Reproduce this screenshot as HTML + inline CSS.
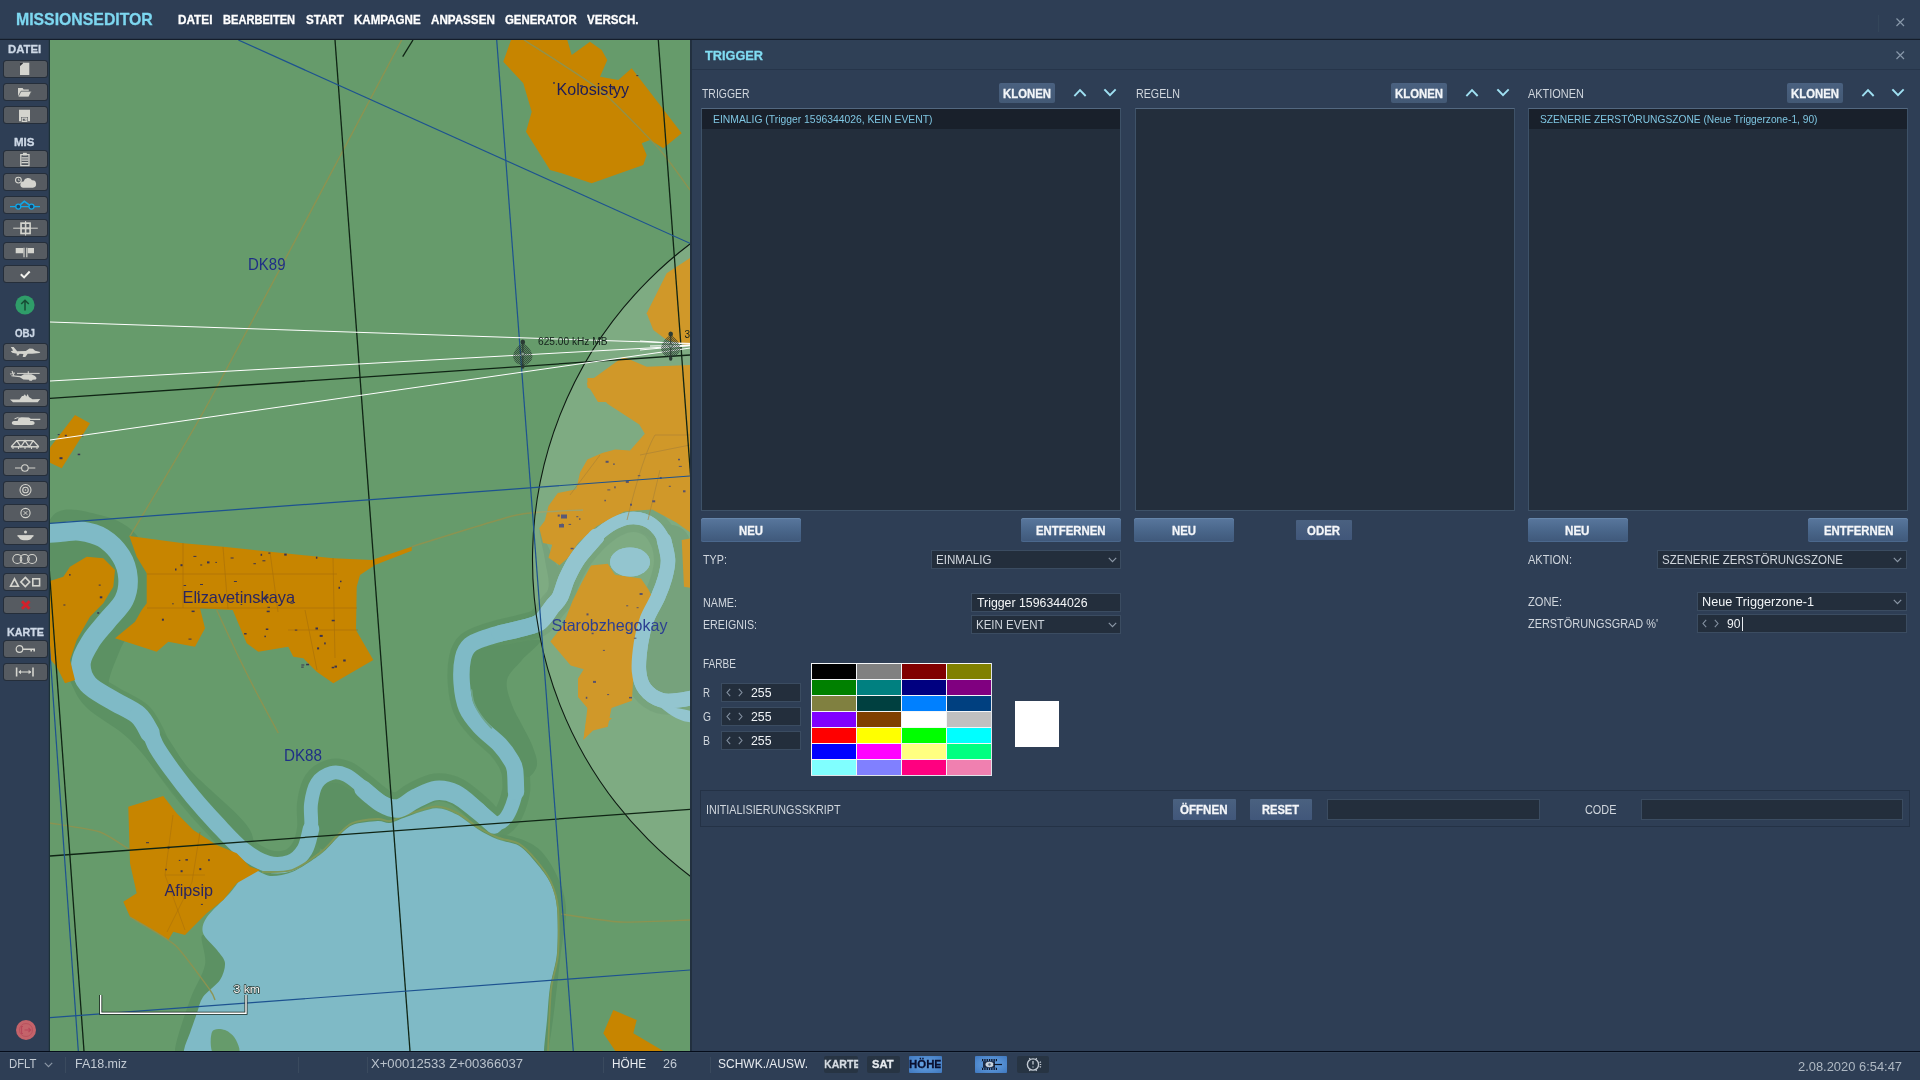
<!DOCTYPE html>
<html><head><meta charset="utf-8"><title>Missionseditor</title>
<style>
*{margin:0;padding:0;box-sizing:border-box}
html,body{width:1920px;height:1080px;overflow:hidden;background:#2e3e55;font-family:"Liberation Sans",sans-serif}
body{position:relative}
.a{position:absolute}
.t{position:absolute;transform-origin:0 0;white-space:pre;line-height:1;font-family:"Liberation Sans",sans-serif}
#top{left:0;top:0;width:1920px;height:38px;background:#2e3e55}
#topline{left:0;top:38px;width:1920px;height:2px;background:linear-gradient(#29384b 50%,#141d2b 50%)}
#side{left:0;top:40px;width:50px;height:1012px;background:#2e3e55}
#sideedge{left:48px;top:40px;width:2px;height:1011px;background:linear-gradient(90deg,#2a3b4d 50%,#1c3138 50%)}
#panel{left:690px;top:40px;width:1230px;height:1012px;background:#2e3e55}
#paneledge{left:690px;top:40px;width:2px;height:1011px;background:#22303f}
#ptitle{left:692px;top:40px;width:1228px;height:29px;background:#2f4056}
#psep{left:692px;top:69px;width:1228px;height:1px;background:#26354a}
#status{left:0;top:1053px;width:1920px;height:27px;background:#2e3e55}
#statline{left:0;top:1051px;width:1920px;height:2px;background:linear-gradient(#050c1a 50%,#33445a 50%)}
.list{background:#232e3c;border:1px solid #3e5268;border-top-color:#536880}
.sel{background:#19202b}
.inp{background:#232e3c;border:1px solid #3b4c61}
.kl{background:linear-gradient(#4a6180,#435975);border-radius:2px}
.btn{border-radius:2.5px;background:linear-gradient(#59779d,#4a678b 50%,#3f587a);box-shadow:inset 0 1px 0 #6685aa,inset 0 -1px 0 #4b688d}
.fbtn{background:linear-gradient(#4a6180,#41577a);border-radius:1px}
.sb{left:4px;width:43px;height:16px;background:#565b61;border-radius:2.5px;box-shadow:0 0 0 1px #252e3a}
.sep{width:1px;height:16px;top:1057px;background:#3a4a5e}
.dk{background:#273443;border-radius:2px}
.act{background:radial-gradient(ellipse at center,#6aa6e6,#3f78bf);border-radius:1px}
.pal{border-top:1px solid #f4f6f8;border-left:1px solid #f4f6f8}
svg{position:absolute;overflow:visible}
#txt{position:absolute;left:0;top:0;width:1920px;height:1080px;will-change:transform;pointer-events:none}

</style></head>
<body>
<svg class="a" style="left:50px;top:40px;overflow:hidden;will-change:transform" width="640" height="1011" viewBox="50 40 640 1011"><rect x="50" y="40" width="640" height="1011" fill="#669b6b"/>
<path d="M40.0 534.0C43.7 533.7 55.3 532.5 62.0 532.0C68.7 531.5 73.2 530.0 80.0 531.0C86.8 532.0 96.2 533.8 103.0 538.0C109.8 542.2 116.8 549.3 121.0 556.0C125.2 562.7 127.5 570.7 128.0 578.0C128.5 585.3 127.5 592.8 124.0 600.0C120.5 607.2 112.5 614.2 107.0 621.0C101.5 627.8 95.3 634.0 91.0 641.0C86.7 648.0 81.5 655.8 81.0 663.0C80.5 670.2 82.8 677.8 88.0 684.0C93.2 690.2 103.7 694.8 112.0 700.0C120.3 705.2 131.7 709.5 138.0 715.0C144.3 720.5 146.8 727.5 150.0 733.0C153.2 738.5 153.3 741.8 157.0 748.0C160.7 754.2 166.0 761.8 172.0 770.0C178.0 778.2 185.5 788.0 193.0 797.0C200.5 806.0 208.7 815.2 217.0 824.0C225.3 832.8 234.5 843.3 243.0 850.0C251.5 856.7 260.2 861.8 268.0 864.0C275.8 866.2 283.9 865.3 290.0 863.0C296.1 860.7 301.1 855.7 304.6 850.0C308.1 844.3 309.9 836.7 311.0 829.0C312.1 821.3 310.0 811.7 311.0 804.0C312.0 796.3 313.6 788.2 317.0 783.0C320.4 777.8 326.9 774.3 331.7 773.0C336.5 771.7 340.8 772.6 346.0 775.0C351.2 777.4 357.1 783.0 363.0 787.5C368.9 792.0 375.9 798.9 381.7 802.0C387.5 805.1 392.4 807.0 398.0 806.0C403.6 805.0 408.7 798.9 415.0 795.8C421.3 792.7 428.9 788.2 435.8 787.5C442.8 786.8 449.8 788.3 456.7 791.7C463.6 795.1 471.3 802.8 477.5 808.0C483.7 813.2 489.1 821.5 494.0 823.0C498.9 824.5 503.0 821.9 506.7 816.7C510.4 811.5 514.6 800.0 516.0 791.7C517.4 783.4 515.2 770.3 515.0 766.7C514.8 763.1 515.7 771.1 515.0 770.0C514.3 768.9 513.5 764.2 511.0 760.0C508.5 755.8 505.2 750.5 500.0 745.0C494.8 739.5 485.6 732.9 480.0 726.7C474.4 720.5 469.8 715.3 466.7 708.0C463.6 700.7 462.3 691.3 461.7 683.0C461.1 674.7 461.6 664.3 463.0 658.0C464.4 651.7 466.3 648.3 470.0 645.0C473.7 641.7 480.0 639.9 485.0 638.0C490.0 636.1 493.7 635.2 500.0 633.5C506.3 631.8 516.3 629.9 523.0 628.0C529.7 626.1 535.2 625.5 540.0 622.0C544.8 618.5 548.7 611.2 552.0 607.0C555.3 602.8 557.5 601.8 560.0 597.0C562.5 592.2 564.0 584.5 567.0 578.0C570.0 571.5 573.2 564.8 578.0 558.0C582.8 551.2 589.8 542.8 596.0 537.0C602.2 531.2 608.7 526.2 615.0 523.0C621.3 519.8 627.8 517.8 634.0 518.0C640.2 518.2 647.0 520.3 652.0 524.0C657.0 527.7 661.3 534.0 664.0 540.0C666.7 546.0 667.8 553.7 668.0 560.0C668.2 566.3 666.7 571.8 665.0 578.0C663.3 584.2 661.0 590.2 658.0 597.0C655.0 603.8 649.8 611.3 647.0 619.0C644.2 626.7 642.3 634.3 641.0 643.0C639.7 651.7 638.3 663.3 639.0 671.0C639.7 678.7 641.3 684.2 645.0 689.0C648.7 693.8 655.2 698.2 661.0 700.0C666.8 701.8 673.5 700.7 680.0 700.0C686.5 699.3 696.7 696.7 700.0 696.0" fill="none" stroke="#5c9163" stroke-width="28" stroke-linecap="round" stroke-linejoin="round" opacity=".8"/>
<path d="M50.0 520.0C58.3 502.5 85.0 511.7 100.0 515.0C115.0 518.3 131.7 525.8 140.0 540.0C148.3 554.2 153.3 581.7 150.0 600.0C146.7 618.3 126.7 633.3 120.0 650.0C113.3 666.7 103.3 686.7 110.0 700.0C116.7 713.3 146.7 718.3 160.0 730.0C173.3 741.7 175.0 753.3 190.0 770.0C205.0 786.7 241.7 815.0 250.0 830.0C258.3 845.0 251.7 865.0 240.0 860.0C228.3 855.0 198.3 820.0 180.0 800.0C161.7 780.0 146.7 756.7 130.0 740.0C113.3 723.3 91.7 716.7 80.0 700.0C68.3 683.3 65.0 653.3 60.0 640.0C55.0 626.7 51.7 640.0 50.0 620.0C48.3 600.0 41.7 537.5 50.0 520.0Z" fill="#5c9163"/>
<path d="M478.0 648.0C483.8 645.5 494.7 646.3 505.0 645.0C515.3 643.7 537.2 637.5 540.0 640.0C542.8 642.5 527.5 653.3 522.0 660.0C516.5 666.7 508.7 672.5 507.0 680.0C505.3 687.5 509.5 697.5 512.0 705.0C514.5 712.5 518.7 718.3 522.0 725.0C525.3 731.7 529.5 738.3 532.0 745.0C534.5 751.7 537.8 759.7 537.0 765.0C536.2 770.3 530.7 777.8 527.0 777.0C523.3 776.2 519.5 766.2 515.0 760.0C510.5 753.8 505.0 746.3 500.0 740.0C495.0 733.7 489.7 727.8 485.0 722.0C480.3 716.2 474.8 712.0 472.0 705.0C469.2 698.0 468.3 687.5 468.0 680.0C467.7 672.5 468.3 665.3 470.0 660.0C471.7 654.7 472.2 650.5 478.0 648.0Z" fill="#5c9163"/>
<path d="M318.0 790.0C321.2 783.8 329.7 783.0 335.0 783.0C340.3 783.0 345.0 787.2 350.0 790.0C355.0 792.8 360.0 796.3 365.0 800.0C370.0 803.7 375.0 809.0 380.0 812.0C385.0 815.0 394.2 815.8 395.0 818.0C395.8 820.2 390.8 824.0 385.0 825.0C379.2 826.0 366.7 822.3 360.0 824.0C353.3 825.7 350.0 830.7 345.0 835.0C340.0 839.3 334.5 848.3 330.0 850.0C325.5 851.7 320.3 850.0 318.0 845.0C315.7 840.0 316.0 829.2 316.0 820.0C316.0 810.8 314.8 796.2 318.0 790.0Z" fill="#5c9163"/>
<path d="M203.0 935.0C208.0 934.2 230.8 951.7 235.0 960.0C239.2 968.3 233.0 978.3 228.0 985.0C223.0 991.7 211.3 989.0 205.0 1000.0C198.7 1011.0 195.0 1042.5 190.0 1051.0C185.0 1059.5 175.0 1059.5 175.0 1051.0C175.0 1042.5 185.0 1014.3 190.0 1000.0C195.0 985.7 202.8 975.8 205.0 965.0C207.2 954.2 198.0 935.8 203.0 935.0Z" fill="#5c9163"/>
<path d="M500.0 835.0C502.5 833.3 529.2 839.2 540.0 850.0C550.8 860.8 561.7 881.7 565.0 900.0C568.3 918.3 562.8 934.8 560.0 960.0C557.2 985.2 551.7 1035.8 548.0 1051.0C544.3 1066.2 538.0 1066.2 538.0 1051.0C538.0 1035.8 546.3 985.2 548.0 960.0C549.7 934.8 551.8 916.7 548.0 900.0C544.2 883.3 533.0 870.8 525.0 860.0C517.0 849.2 497.5 836.7 500.0 835.0Z" fill="#5c9163"/>
<path d="M540.0 530.0C542.5 531.7 554.2 562.5 560.0 570.0C565.8 577.5 573.3 570.0 575.0 575.0C576.7 580.0 574.2 591.7 570.0 600.0C565.8 608.3 558.3 618.3 550.0 625.0C541.7 631.7 528.3 639.2 520.0 640.0C511.7 640.8 498.3 634.2 500.0 630.0C501.7 625.8 522.0 621.7 530.0 615.0C538.0 608.3 545.5 599.2 548.0 590.0C550.5 580.8 546.3 570.0 545.0 560.0C543.7 550.0 537.5 528.3 540.0 530.0Z" fill="#5c9163"/>
<path d="M640.0 530.0C645.0 529.2 681.7 513.3 690.0 540.0C698.3 566.7 696.7 665.0 690.0 690.0C683.3 715.0 657.0 696.7 650.0 690.0C643.0 683.3 647.2 663.3 648.0 650.0C648.8 636.7 651.7 623.3 655.0 610.0C658.3 596.7 667.2 580.8 668.0 570.0C668.8 559.2 664.7 551.7 660.0 545.0C655.3 538.3 635.0 530.8 640.0 530.0Z" fill="#5c9163"/>
<path d="M250.0 870.0C256.0 867.5 263.7 875.7 270.0 876.0C276.3 876.3 284.4 875.3 292.0 872.0C299.6 868.7 314.2 859.1 321.0 854.0C327.8 848.9 332.3 842.4 337.0 838.0C341.7 833.6 346.4 827.5 352.5 825.0C358.6 822.5 371.9 821.3 377.5 821.0C383.1 820.7 385.6 823.6 390.0 823.0C394.4 822.4 399.8 818.9 406.7 816.7C413.6 814.5 428.3 808.6 435.8 808.3C443.3 808.0 450.4 811.5 456.7 814.6C463.0 817.7 471.3 825.2 477.5 829.0C483.7 832.8 491.8 837.1 498.0 839.6C504.2 842.1 513.3 842.4 519.0 845.8C524.7 849.2 531.1 856.9 535.8 862.5C540.5 868.1 547.2 876.2 550.4 883.0C553.6 889.8 556.0 897.5 557.0 908.0C558.0 918.5 558.0 941.1 557.0 953.0C556.0 964.9 551.5 977.0 550.0 987.0C548.5 997.0 547.9 1010.5 547.0 1020.0C546.1 1029.5 544.6 1041.8 544.0 1050.0C543.4 1058.2 543.6 1064.5 543.0 1075.0C542.4 1085.5 593.0 1113.2 540.0 1120.0C487.1 1126.8 243.6 1126.8 190.0 1120.0C136.4 1113.2 183.9 1085.5 183.0 1075.0C182.1 1064.5 182.9 1056.3 184.0 1050.0C185.1 1043.7 188.1 1038.5 190.0 1033.0C191.9 1027.5 195.1 1018.4 197.0 1013.0C198.9 1007.6 199.6 1002.0 203.0 997.0C206.4 992.0 216.7 985.1 220.0 980.0C223.3 974.9 225.4 967.5 225.0 963.0C224.6 958.5 220.3 954.5 217.0 950.0C213.7 945.5 204.5 938.0 203.0 933.0C201.5 928.0 202.9 923.0 207.0 917.0C211.1 911.0 223.6 900.0 230.0 893.0C236.4 886.0 244.0 872.5 250.0 870.0Z" fill="#7fbac6"/>
<path d="M212.0 1032.0C213.8 1027.8 221.0 1028.7 225.0 1030.0C229.0 1031.3 233.8 1035.8 236.0 1040.0C238.2 1044.2 241.7 1052.5 238.0 1055.0C234.3 1057.5 218.3 1058.8 214.0 1055.0C209.7 1051.2 210.2 1036.2 212.0 1032.0Z" fill="#669b6b"/>
<path d="M40.0 534.0C43.7 533.7 55.3 532.5 62.0 532.0C68.7 531.5 73.2 530.0 80.0 531.0C86.8 532.0 96.2 533.8 103.0 538.0C109.8 542.2 116.8 549.3 121.0 556.0C125.2 562.7 127.5 570.7 128.0 578.0C128.5 585.3 127.5 592.8 124.0 600.0C120.5 607.2 112.5 614.2 107.0 621.0C101.5 627.8 95.3 634.0 91.0 641.0C86.7 648.0 81.5 655.8 81.0 663.0C80.5 670.2 82.8 677.8 88.0 684.0C93.2 690.2 103.7 694.8 112.0 700.0C120.3 705.2 131.7 709.5 138.0 715.0C144.3 720.5 148.0 730.0 150.0 733.0" fill="none" stroke="#7fbac6" stroke-width="19.5" stroke-linecap="round" stroke-linejoin="round"/>
<path d="M138.0 715.0C140.0 718.0 146.8 727.5 150.0 733.0C153.2 738.5 153.3 741.8 157.0 748.0C160.7 754.2 166.0 761.8 172.0 770.0C178.0 778.2 185.5 788.0 193.0 797.0C200.5 806.0 208.7 815.2 217.0 824.0C225.3 832.8 234.5 843.3 243.0 850.0C251.5 856.7 260.2 861.8 268.0 864.0C275.8 866.2 283.9 865.3 290.0 863.0C296.1 860.7 301.1 855.7 304.6 850.0C308.1 844.3 309.9 832.5 311.0 829.0" fill="none" stroke="#7fbac6" stroke-width="16.5" stroke-linecap="round" stroke-linejoin="round"/>
<path d="M304.6 850.0C305.7 846.5 309.9 836.7 311.0 829.0C312.1 821.3 310.0 811.7 311.0 804.0C312.0 796.3 313.6 788.2 317.0 783.0C320.4 777.8 326.9 774.3 331.7 773.0C336.5 771.7 340.8 772.6 346.0 775.0C351.2 777.4 357.1 783.0 363.0 787.5C368.9 792.0 375.9 798.9 381.7 802.0C387.5 805.1 392.4 807.0 398.0 806.0C403.6 805.0 408.7 798.9 415.0 795.8C421.3 792.7 428.9 788.2 435.8 787.5C442.8 786.8 449.8 788.3 456.7 791.7C463.6 795.1 471.3 802.8 477.5 808.0C483.7 813.2 489.1 821.5 494.0 823.0C498.9 824.5 503.0 821.9 506.7 816.7C510.4 811.5 514.6 800.0 516.0 791.7C517.4 783.4 515.2 770.9 515.0 766.7" fill="none" stroke="#7fbac6" stroke-width="13.8" stroke-linecap="round" stroke-linejoin="round"/>
<path d="M516.0 791.7C515.8 788.1 515.8 775.3 515.0 770.0C514.2 764.7 513.5 764.2 511.0 760.0C508.5 755.8 505.2 750.5 500.0 745.0C494.8 739.5 485.6 732.9 480.0 726.7C474.4 720.5 469.8 715.3 466.7 708.0C463.6 700.7 462.3 691.3 461.7 683.0C461.1 674.7 461.6 664.3 463.0 658.0C464.4 651.7 466.3 648.3 470.0 645.0C473.7 641.7 480.0 639.9 485.0 638.0C490.0 636.1 493.7 635.2 500.0 633.5C506.3 631.8 516.3 629.9 523.0 628.0C529.7 626.1 535.2 625.5 540.0 622.0C544.8 618.5 548.7 611.2 552.0 607.0C555.3 602.8 557.5 601.8 560.0 597.0C562.5 592.2 564.0 584.5 567.0 578.0C570.0 571.5 573.2 564.8 578.0 558.0C582.8 551.2 593.0 540.5 596.0 537.0" fill="none" stroke="#7fbac6" stroke-width="16.5" stroke-linecap="round" stroke-linejoin="round"/>
<path d="M578.0 558.0C581.0 554.5 589.8 542.8 596.0 537.0C602.2 531.2 608.7 526.2 615.0 523.0C621.3 519.8 627.8 517.8 634.0 518.0C640.2 518.2 647.0 520.3 652.0 524.0C657.0 527.7 661.3 534.0 664.0 540.0C666.7 546.0 667.3 556.7 668.0 560.0" fill="none" stroke="#7fbac6" stroke-width="12.5" stroke-linecap="round" stroke-linejoin="round"/>
<path d="M664.0 540.0C664.7 543.3 667.8 553.7 668.0 560.0C668.2 566.3 666.7 571.8 665.0 578.0C663.3 584.2 661.0 590.2 658.0 597.0C655.0 603.8 649.8 611.3 647.0 619.0C644.2 626.7 642.3 634.3 641.0 643.0C639.7 651.7 638.3 663.3 639.0 671.0C639.7 678.7 641.3 684.2 645.0 689.0C648.7 693.8 655.2 698.2 661.0 700.0C666.8 701.8 673.5 700.7 680.0 700.0C686.5 699.3 696.7 696.7 700.0 696.0" fill="none" stroke="#7fbac6" stroke-width="14.5" stroke-linecap="round" stroke-linejoin="round"/>
<path d="M262.0 872.0C266.5 871.7 283.1 873.0 292.0 870.0C300.9 867.0 314.2 857.1 321.0 852.0C327.8 846.9 332.3 840.4 337.0 836.0C341.7 831.6 346.4 825.5 352.5 823.0C358.6 820.5 371.9 819.3 377.5 819.0C383.1 818.7 385.6 821.6 390.0 821.0C394.4 820.4 399.8 816.9 406.7 814.7C413.6 812.5 428.3 806.6 435.8 806.3C443.3 806.0 450.4 809.5 456.7 812.6C463.0 815.7 471.3 823.2 477.5 827.0C483.7 830.8 491.8 835.1 498.0 837.6C504.2 840.1 513.3 840.4 519.0 843.8C524.7 847.2 531.2 854.3 536.0 860.0C540.8 865.7 547.7 874.8 551.0 882.0C554.3 889.2 557.0 897.0 558.0 908.0C559.0 919.0 559.0 942.7 558.0 955.0C557.0 967.3 552.5 975.6 551.0 990.0C549.5 1004.4 548.5 1041.8 548.0 1051.0" fill="none" stroke="#7f9858" stroke-width="1.8"/>
<path d="M363.0 789.0C366.1 791.5 375.9 800.7 381.7 804.0C387.5 807.3 392.4 809.7 398.0 809.0C403.6 808.3 408.7 802.9 415.0 800.0C421.3 797.1 428.9 792.2 435.8 791.5C442.8 790.8 449.8 792.2 456.7 795.5C463.6 798.8 471.3 806.1 477.5 811.0C483.7 815.9 491.2 822.7 494.0 825.0" fill="none" stroke="#7fbac6" stroke-width="17.5" stroke-linecap="round"/>
<path d="M471.5 690.0C471.9 692.2 472.2 698.5 474.0 703.0C475.8 707.5 479.1 712.8 482.0 717.0C484.9 721.2 489.9 726.2 491.5 728.0" fill="none" stroke="#6fa58b" stroke-width="1.600" stroke-linecap="round"/>
<ellipse cx="630" cy="562" rx="20" ry="14.5" fill="#7fbac6"/>
<path d="M660.0 706.0C660.0 704.3 670.7 707.0 676.0 708.0C681.3 709.0 689.3 709.7 692.0 712.0C694.7 714.3 694.7 721.0 692.0 722.0C689.3 723.0 681.3 720.7 676.0 718.0C670.7 715.3 660.0 707.7 660.0 706.0Z" fill="#7fbac6"/>
<path d="M511.7 38.0L566.7 38.0L571.7 55.0L590.0 41.7L601.7 50.0L607.3 60.0L600.0 76.7L618.3 80.0L631.7 68.3L681.7 133.3L663.3 148.3L650.0 140.0L641.7 143.3L646.7 155.0L643.3 165.0L591.7 183.3L561.7 173.3L550.0 170.0L526.0 131.7L531.7 111.7L523.3 83.3L503.3 61.7Z" fill="#c78500"/>
<path d="M129.3 536.0L183.3 543.3L223.3 546.7L270.0 551.7L333.3 558.3L371.7 560.0L411.7 546.7L411.7 550.7L375.0 565.0L360.0 575.0L356.7 586.7L356.0 630.0L373.3 660.0L333.3 683.3L316.7 671.7L303.3 658.3L293.3 656.7L288.3 646.7L258.3 651.7L246.7 643.3L232.7 610.0L200.0 608.3L205.0 628.3L195.0 646.7L168.3 641.7L156.7 651.7L115.0 638.3L125.0 630.0L135.0 621.7L141.7 610.0L146.7 603.3L146.7 573.3L136.7 556.7Z" fill="#c78500"/>
<path d="M48.0 581.7L63.3 576.7L70.0 566.7L86.7 556.7L103.3 558.3L115.0 570.0L113.3 586.7L103.3 603.3L90.0 616.7L76.7 640.0L70.0 660.0L75.0 680.0L65.0 683.3L56.7 666.7L48.0 656.7Z" fill="#c78500"/>
<path d="M75.0 415.0L90.0 423.3L61.7 468.3L48.0 461.7L48.0 450.0Z" fill="#c78500"/>
<path d="M128.3 806.7L163.3 796.0L176.7 813.3L193.3 830.0L216.7 845.0L236.7 853.3L250.0 866.7L260.0 870.0L236.7 883.3L223.3 900.0L206.7 913.3L196.7 923.3L185.0 935.0L173.3 931.7L168.3 940.0L130.0 916.7L123.3 901.7L136.7 893.3L130.0 863.3Z" fill="#c78500"/>
<path d="M613.3 1010.0L636.7 1020.0L633.3 1033.3L666.7 1053.0L616.7 1053.0L603.3 1033.3Z" fill="#c78500"/>
<path d="M586.7 718.0L612.0 718.0L603.3 726.7L590.0 730.0L583.3 740.0Z" fill="#c78500"/>
<path d="M591.0 565.6L607.8 563.7L615.0 574.8L641.0 578.5L648.5 589.6L652.2 597.0L644.8 610.0L637.4 634.0L633.7 671.0L631.9 700.7L611.5 708.0L607.8 726.7L593.0 730.4L583.7 739.6L587.4 708.0L578.0 697.0L578.0 678.5L583.7 669.3L570.7 665.6L550.4 641.5L563.3 624.8L572.6 600.7L581.9 582.2Z" fill="#c78500"/>
<path d="M587.4 378.0L587.4 387.4L597.6 393.0L607.8 404.0L639.3 424.4L644.8 433.7L630.0 450.4L615.2 449.4L602.2 453.1L587.4 459.6L580.0 472.6L576.3 489.3L557.8 493.0L548.5 505.9L544.8 520.7L539.3 528.1L543.0 543.0L552.2 544.8L548.5 557.8L559.6 565.2L568.0 557.8L578.1 543.0L596.7 526.3L624.4 511.5L652.2 509.6L676.3 522.6L692.0 533.7L692.0 378.0Z" fill="#c78500"/>
<path d="M692.0 256.7L666.7 273.3L646.7 313.3L653.3 330.0L666.7 340.0L692.0 346.7Z" fill="#c78500"/>
<path d="M586.7 383.3L623.3 356.7L646.7 366.7L692.0 365.0L692.0 402.0L598.0 402.0Z" fill="#c78500"/>
<path d="M681.7 540.0L692.0 538.0L692.0 588.0L684.0 586.7Z" fill="#c78500"/>
<ellipse cx="630" cy="562" rx="20" ry="14.5" fill="#7fbac6"/>
<path d="M578.0 558.0C581.0 554.5 589.8 542.8 596.0 537.0C602.2 531.2 608.7 526.2 615.0 523.0C621.3 519.8 627.8 517.8 634.0 518.0C640.2 518.2 647.0 520.3 652.0 524.0C657.0 527.7 661.3 534.0 664.0 540.0C666.7 546.0 667.3 556.7 668.0 560.0" fill="none" stroke="#7fbac6" stroke-width="12.5" stroke-linecap="round"/>
<path d="M664.0 540.0C664.7 543.3 667.8 553.7 668.0 560.0C668.2 566.3 666.7 571.8 665.0 578.0C663.3 584.2 661.0 590.2 658.0 597.0C655.0 603.8 649.8 611.3 647.0 619.0C644.2 626.7 642.3 634.3 641.0 643.0C639.7 651.7 638.3 663.3 639.0 671.0C639.7 678.7 641.3 684.2 645.0 689.0C648.7 693.8 655.2 698.2 661.0 700.0C666.8 701.8 673.5 700.7 680.0 700.0C686.5 699.3 696.7 696.7 700.0 696.0" fill="none" stroke="#7fbac6" stroke-width="14.5" stroke-linecap="round"/>
<path d="M500.0 633.5C503.8 632.6 516.3 629.9 523.0 628.0C529.7 626.1 535.2 625.5 540.0 622.0C544.8 618.5 548.7 611.2 552.0 607.0C555.3 602.8 557.5 601.8 560.0 597.0C562.5 592.2 564.0 584.5 567.0 578.0C570.0 571.5 573.2 564.8 578.0 558.0C582.8 551.2 593.0 540.5 596.0 537.0" fill="none" stroke="#7fbac6" stroke-width="16.5" stroke-linecap="round"/>
<path d="M401.7 40.0C382.5 76.0 237.2 350.4 210.0 400.0C182.8 449.6 138.0 522.4 130.0 536.0" fill="none" stroke="#8d9250" stroke-width="1.4" opacity=".95"/>
<path d="M216.7 610.0C218.7 614.3 232.7 644.7 236.7 653.0C240.7 661.3 252.5 685.0 256.7 693.0C260.9 701.0 276.1 729.0 278.3 733.0" fill="none" stroke="#8d9250" stroke-width="1.4" opacity=".95"/>
<path d="M411.7 546.7C422.2 543.5 499.6 518.7 516.7 515.0C533.8 511.3 576.4 510.5 583.0 510.0" fill="none" stroke="#8d9250" stroke-width="1.4" opacity=".95"/>
<path d="M50.0 823.0C55.0 823.9 92.0 829.3 100.0 832.0C108.0 834.7 127.0 848.2 130.0 850.0" fill="none" stroke="#8d9250" stroke-width="1.4" opacity=".95"/>
<path d="M130.0 917.0C134.5 919.8 167.0 937.7 175.0 945.0C183.0 952.3 206.0 984.5 210.0 990.0C214.0 995.5 214.5 999.0 215.0 1000.0" fill="none" stroke="#8d9250" stroke-width="1.4" opacity=".95"/>
<path d="M561.0 914.0C566.9 914.8 607.1 921.4 620.0 922.0C632.9 922.6 683.0 920.2 690.0 920.0" fill="none" stroke="#8d9250" stroke-width="1.4" opacity=".95"/>
<path d="M524.0 40.0C531.6 45.0 586.4 79.0 600.0 90.0C613.6 101.0 651.0 140.0 660.0 150.0C669.0 160.0 687.0 186.0 690.0 190.0" fill="none" stroke="#8d9250" stroke-width="1.4" opacity=".95"/>
<path d="M183 543V608M223 547l5 62M270 552l8 60M333 558l2 100M147 574h190M147 608h210M288 630h70M305 610l12 60" fill="none" stroke="#a8700a" stroke-width=".8" opacity=".8"/>
<path d="M655 435h35M655 435q-12 20-28 85M600 455l-30 40M640 455l50-10M660 470l-12 50" fill="none" stroke="#9a6a10" stroke-width=".8" opacity=".8"/>
<path d="M173 815l-8 60l20 55M200 832l-8 50l-25 50M165 875h40" fill="none" stroke="#a8700a" stroke-width=".7" opacity=".8"/>
<rect x="215.4" y="561.9" width="1.5" height="1" fill="#3a3350"/>
<rect x="315.9" y="556.7" width="1.5" height="2" fill="#3a3350"/>
<rect x="193.4" y="555.9" width="3" height="1" fill="#3a3350"/>
<rect x="198.6" y="598.7" width="1.5" height="2" fill="#3a3350"/>
<rect x="175.0" y="568.5" width="1.5" height="2" fill="#3a3350"/>
<rect x="268.3" y="552.6" width="2" height="1" fill="#3a3350"/>
<rect x="262.4" y="560.3" width="3" height="1" fill="#3a3350"/>
<rect x="259.2" y="600.5" width="2" height="1" fill="#3a3350"/>
<rect x="267.5" y="606.8" width="2.5" height="1" fill="#3a3350"/>
<rect x="260.6" y="553.8" width="1.5" height="2" fill="#3a3350"/>
<rect x="191.6" y="610.6" width="3" height="1.5" fill="#3a3350"/>
<rect x="244.1" y="633.0" width="2.5" height="1.5" fill="#3a3350"/>
<rect x="200.2" y="564.5" width="2" height="1" fill="#3a3350"/>
<rect x="266.0" y="596.3" width="2.5" height="2" fill="#3a3350"/>
<rect x="240.7" y="604.0" width="1.5" height="1" fill="#3a3350"/>
<rect x="253.4" y="563.2" width="2.5" height="1" fill="#3a3350"/>
<rect x="338.5" y="586.8" width="1.5" height="2" fill="#3a3350"/>
<rect x="265.8" y="628.5" width="2.5" height="1.5" fill="#3a3350"/>
<rect x="290.4" y="602.7" width="3" height="1" fill="#3a3350"/>
<rect x="319.7" y="634.9" width="3" height="2" fill="#3a3350"/>
<rect x="284.2" y="553.6" width="2.5" height="2" fill="#3a3350"/>
<rect x="266.7" y="610.7" width="3" height="1.5" fill="#3a3350"/>
<rect x="294.8" y="629.6" width="2.5" height="1" fill="#3a3350"/>
<rect x="340.0" y="580.7" width="1.5" height="1.5" fill="#3a3350"/>
<rect x="161.9" y="618.7" width="2" height="2" fill="#3a3350"/>
<rect x="200.0" y="584.0" width="3" height="1" fill="#3a3350"/>
<rect x="183.6" y="585.0" width="2.5" height="1" fill="#3a3350"/>
<rect x="315.5" y="627.5" width="2.5" height="2" fill="#3a3350"/>
<rect x="233.9" y="581.0" width="3" height="1" fill="#3a3350"/>
<rect x="180.5" y="564.2" width="2" height="2" fill="#3a3350"/>
<rect x="197.1" y="592.6" width="2" height="1.5" fill="#3a3350"/>
<rect x="207.0" y="561.4" width="2.5" height="2" fill="#3a3350"/>
<rect x="264.4" y="635.7" width="1.5" height="1.5" fill="#3a3350"/>
<rect x="331.7" y="619.8" width="3" height="1.5" fill="#3a3350"/>
<rect x="230.6" y="557.5" width="3" height="1" fill="#3a3350"/>
<rect x="188.5" y="638.6" width="3" height="1" fill="#3a3350"/>
<rect x="172.2" y="603.3" width="1.5" height="1" fill="#3a3350"/>
<rect x="264.5" y="597.4" width="2.5" height="2" fill="#3a3350"/>
<rect x="301.3" y="664.5" width="3" height="1" fill="#3a3350"/>
<rect x="331.7" y="666.8" width="2.5" height="1.5" fill="#3a3350"/>
<rect x="306.1" y="663.8" width="3" height="1.5" fill="#3a3350"/>
<rect x="324.2" y="642.4" width="1.5" height="2" fill="#3a3350"/>
<rect x="317.1" y="647.4" width="2" height="2" fill="#3a3350"/>
<rect x="301.2" y="666.6" width="2.5" height="1" fill="#3a3350"/>
<rect x="334.5" y="665.6" width="2.5" height="2" fill="#3a3350"/>
<rect x="343.2" y="659.5" width="2.5" height="2" fill="#3a3350"/>
<rect x="167.5" y="846.7" width="2" height="2" fill="#3a3350"/>
<rect x="180.6" y="870.2" width="2" height="2" fill="#3a3350"/>
<rect x="200.9" y="903.9" width="2" height="1" fill="#3a3350"/>
<rect x="201.4" y="886.8" width="2" height="1" fill="#3a3350"/>
<rect x="178.8" y="859.9" width="1.5" height="1" fill="#3a3350"/>
<rect x="199.3" y="868.1" width="2" height="2" fill="#3a3350"/>
<rect x="185.4" y="859.1" width="2.5" height="1.5" fill="#3a3350"/>
<rect x="146.0" y="842.2" width="3" height="1" fill="#3a3350"/>
<rect x="165.3" y="868.8" width="1.5" height="1.5" fill="#3a3350"/>
<rect x="208.2" y="859.1" width="1.5" height="2" fill="#3a3350"/>
<rect x="591.6" y="632.7" width="2" height="1.5" fill="#3a3350"/>
<rect x="633.9" y="637.7" width="2.5" height="1" fill="#3a3350"/>
<rect x="629.0" y="696.9" width="3" height="1.5" fill="#3a3350"/>
<rect x="607.1" y="694.1" width="2" height="1" fill="#3a3350"/>
<rect x="639.6" y="593.0" width="3" height="2" fill="#3a3350"/>
<rect x="593.0" y="680.9" width="3" height="2" fill="#3a3350"/>
<rect x="636.6" y="607.2" width="2" height="1" fill="#3a3350"/>
<rect x="585.8" y="696.8" width="1.5" height="2" fill="#3a3350"/>
<rect x="626.2" y="605.3" width="2" height="1" fill="#3a3350"/>
<rect x="586.5" y="613.4" width="2" height="2" fill="#3a3350"/>
<rect x="602.9" y="649.9" width="2" height="1" fill="#3a3350"/>
<rect x="635.1" y="628.9" width="3" height="2" fill="#3a3350"/>
<rect x="652.2" y="500.3" width="3" height="2" fill="#3a3350"/>
<rect x="613.2" y="463.4" width="1.5" height="1.5" fill="#3a3350"/>
<rect x="668.8" y="485.8" width="2" height="1" fill="#3a3350"/>
<rect x="614.2" y="486.3" width="1.5" height="2" fill="#3a3350"/>
<rect x="607.3" y="489.4" width="3" height="1" fill="#3a3350"/>
<rect x="678.0" y="458.8" width="2" height="1.5" fill="#3a3350"/>
<rect x="605.6" y="460.8" width="3" height="2" fill="#3a3350"/>
<rect x="604.4" y="499.8" width="1.5" height="1.5" fill="#3a3350"/>
<rect x="630.0" y="503.7" width="2" height="2" fill="#3a3350"/>
<rect x="625.8" y="480.9" width="3" height="2" fill="#3a3350"/>
<rect x="683.0" y="490.3" width="2.5" height="2" fill="#3a3350"/>
<rect x="678.8" y="465.9" width="3" height="1" fill="#3a3350"/>
<rect x="637.8" y="475.2" width="2.5" height="1" fill="#3a3350"/>
<rect x="659.7" y="477.0" width="2" height="2" fill="#3a3350"/>
<rect x="557.7" y="514.6" width="2" height="2" fill="#3a3350"/>
<rect x="568.6" y="523.9" width="2.5" height="1" fill="#3a3350"/>
<rect x="579.0" y="518.3" width="1.5" height="1.5" fill="#3a3350"/>
<rect x="576.3" y="516.2" width="2" height="1" fill="#3a3350"/>
<rect x="570.6" y="547.8" width="3" height="1.5" fill="#3a3350"/>
<rect x="561.5" y="523.6" width="1.5" height="2" fill="#3a3350"/>
<rect x="579.8" y="85.2" width="3" height="1.5" fill="#3a3350"/>
<rect x="611.8" y="87.3" width="2.5" height="2" fill="#3a3350"/>
<rect x="636.3" y="75.1" width="2" height="1" fill="#3a3350"/>
<rect x="553.0" y="82.2" width="2" height="1.5" fill="#3a3350"/>
<rect x="77.7" y="453.7" width="2.5" height="1.5" fill="#3a3350"/>
<rect x="59.5" y="457.2" width="3" height="2" fill="#3a3350"/>
<rect x="64.8" y="434.8" width="2" height="1.5" fill="#3a3350"/>
<rect x="81.9" y="434.4" width="1.5" height="2" fill="#3a3350"/>
<rect x="57.7" y="434.1" width="2" height="1" fill="#3a3350"/>
<rect x="69.1" y="574.1" width="1.5" height="1.5" fill="#3a3350"/>
<rect x="99.8" y="596.3" width="2.5" height="2" fill="#3a3350"/>
<rect x="63.4" y="604.5" width="2" height="1" fill="#3a3350"/>
<rect x="98.7" y="584.6" width="2" height="1" fill="#3a3350"/>
<rect x="97.2" y="612.2" width="2" height="1.5" fill="#3a3350"/>
<rect x="561" y="514.5" width="6" height="4" fill="#3a3a5e"/><rect x="559" y="524" width="5" height="3.5" fill="#3a3a5e"/>
<circle cx="928" cy="560" r="395.5" fill="#ffffff" fill-opacity=".16" stroke="none"/>
<circle cx="928" cy="560" r="395.5" fill="none" stroke="#0e1a12" stroke-width="1.1"/>
<path d="M335 40L410 1051" stroke="#0f2414" stroke-width="1.3"/>
<path d="M658.3 40L692 495" stroke="#0f2414" stroke-width="1.3"/>
<path d="M32 330L84 1051" stroke="#0f2414" stroke-width="1.3"/>
<path d="M50 398.3L690 355" stroke="#0f2414" stroke-width="1.3"/>
<path d="M50 856L690 809.3" stroke="#0f2414" stroke-width="1.3"/>
<path d="M413 40L402.7 56.7" stroke="#0f2414" stroke-width="1.3"/>
<path d="M238.3 40L690 243.3" stroke="#1d5290" stroke-width="1.2"/>
<path d="M496.7 40L573.3 1051" stroke="#1d5290" stroke-width="1.2"/>
<path d="M27 330L78.3 1051" stroke="#1d5290" stroke-width="1.2"/>
<path d="M50 523.3L690 476" stroke="#1d5290" stroke-width="1.2"/>
<path d="M50 1017.7L690 970" stroke="#1d5290" stroke-width="1.2"/>
<path d="M50 322L716 344.3" stroke="#ffffff" stroke-width="1"/>
<path d="M50 381L716 344.3" stroke="#ffffff" stroke-width="1"/>
<path d="M50 440L716 344.3" stroke="#ffffff" stroke-width="1"/>
<path d="M640 341L716 346" stroke="#ffffff" stroke-width="1"/>
<path d="M640 350L716 343" stroke="#ffffff" stroke-width="1"/>
<path d="M650 346L716 345" stroke="#ffffff" stroke-width="1"/>
<defs><pattern id="ht" width="2" height="2" patternUnits="userSpaceOnUse"><rect width="1" height="1" fill="#22312c"/><rect x="1" y="1" width="1" height="1" fill="#22312c"/></pattern></defs>
<g><path d="M522.8 343C526.8 345 532.5999999999999 351 532.4 357C532.0 362 526.8 365 522.8 365.5C518.8 365 513.5999999999999 362 513.1999999999999 357C513.0 351 518.8 345 522.8 343Z" fill="#2a3b36" fill-opacity=".22"/><path d="M522.8 343C526.8 345 532.5999999999999 351 532.4 357C532.0 362 526.8 365 522.8 365.5C518.8 365 513.5999999999999 362 513.1999999999999 357C513.0 351 518.8 345 522.8 343Z" fill="url(#ht)" fill-opacity=".6"/><path d="M522.8 343V366" stroke="#26322e" stroke-width="1.3" opacity=".7"/><ellipse cx="522.8" cy="342" rx="2.3" ry="2.5" fill="#2a3a34"/><ellipse cx="522.8" cy="366.5" rx="1.7" ry="2.2" fill="#2a3a34"/><circle cx="522.8" cy="354" r="1.8" fill="#8aa593" stroke="#3a4a46" stroke-width=".7"/></g>
<g><path d="M670.7 335C674.7 337 680.5 343 680.3000000000001 349C679.9000000000001 354 674.7 357 670.7 357.5C666.7 357 661.5 354 661.1 349C660.9000000000001 343 666.7 337 670.7 335Z" fill="#2a3b36" fill-opacity=".22"/><path d="M670.7 335C674.7 337 680.5 343 680.3000000000001 349C679.9000000000001 354 674.7 357 670.7 357.5C666.7 357 661.5 354 661.1 349C660.9000000000001 343 666.7 337 670.7 335Z" fill="url(#ht)" fill-opacity=".6"/><path d="M670.7 335V358" stroke="#26322e" stroke-width="1.3" opacity=".7"/><ellipse cx="670.7" cy="334" rx="2.3" ry="2.5" fill="#2a3a34"/><ellipse cx="670.7" cy="358.5" rx="1.7" ry="2.2" fill="#2a3a34"/><circle cx="670.7" cy="346" r="1.8" fill="#8aa593" stroke="#3a4a46" stroke-width=".7"/></g>
<path d="M100.700 995V1013.300H246V995" fill="none" stroke="#1c2a22" stroke-width="3"/><path d="M100.700 995V1013.300H246V995" fill="none" stroke="#ffffff" stroke-width="1.400"/>
<text x="556.5" y="95" font-family="Liberation Sans, sans-serif" font-size="16.5" fill="#1d1c58" textLength="72.5" lengthAdjust="spacingAndGlyphs" >Kolosistyy</text>
<text x="248" y="270" font-family="Liberation Sans, sans-serif" font-size="16.5" fill="#1f2f86" textLength="37.5" lengthAdjust="spacingAndGlyphs" >DK89</text>
<text x="284" y="761" font-family="Liberation Sans, sans-serif" font-size="16.5" fill="#1f2f86" textLength="38" lengthAdjust="spacingAndGlyphs" >DK88</text>
<text x="182.5" y="603" font-family="Liberation Sans, sans-serif" font-size="16.5" fill="#2a2560" textLength="112.5" lengthAdjust="spacingAndGlyphs" >Elizavetinskaya</text>
<text x="551.5" y="631" font-family="Liberation Sans, sans-serif" font-size="16.5" fill="#2c3f92" textLength="116" lengthAdjust="spacingAndGlyphs" >Starobzhegokay</text>
<text x="164.5" y="896" font-family="Liberation Sans, sans-serif" font-size="16.5" fill="#2a2560" textLength="48.5" lengthAdjust="spacingAndGlyphs" >Afipsip</text>
<text x="538" y="345" font-family="Liberation Sans, sans-serif" font-size="10" fill="#13201a" textLength="69.5" lengthAdjust="spacingAndGlyphs" >625.00 kHz MB</text>
<text x="684.5" y="338" font-family="Liberation Sans, sans-serif" font-size="10" fill="#13201a" >3</text>
<text x="233.5" y="992.5" font-family="Liberation Sans, sans-serif" font-size="11.5" fill="#ffffff" textLength="26.5" lengthAdjust="spacingAndGlyphs" stroke="#24332b" stroke-width="1.4" paint-order="stroke" stroke-linejoin="round">3 km</text></svg>
<div id="top" class="a"></div><div id="topline" class="a"></div>
<div id="side" class="a"></div><div id="sideedge" class="a"></div>
<div id="panel" class="a"></div><div id="paneledge" class="a"></div>
<div id="ptitle" class="a"></div><div id="psep" class="a"></div>
<div id="statline" class="a"></div><div id="status" class="a"></div>
<div class="a list" style="left:701px;top:108px;width:420px;height:403px;"></div>
<div class="a sel" style="left:702px;top:109px;width:418px;height:20px;"></div>
<div class="a list" style="left:1135px;top:108px;width:380px;height:403px;"></div>
<div class="a list" style="left:1528px;top:108px;width:380px;height:403px;"></div>
<div class="a sel" style="left:1529px;top:109px;width:378px;height:20px;"></div>
<div class="a kl" style="left:999px;top:83px;width:56px;height:20px;"></div>
<div class="a kl" style="left:1391px;top:83px;width:56px;height:20px;"></div>
<div class="a kl" style="left:1787px;top:83px;width:56px;height:20px;"></div>
<svg class="a" style="left:1074px;top:89.3px" width="12" height="7.3" viewBox="0 0 12 7.3"><path d="M1 6.3 L6.0 1.2 L11 6.3" fill="none" stroke="#9fe0f2" stroke-width="1.9" stroke-linecap="square" stroke-linejoin="miter"/></svg>
<svg class="a" style="left:1104px;top:88.9px" width="12" height="7.3" viewBox="0 0 12 7.3"><path d="M1 1 L6.0 6.1 L11 1" fill="none" stroke="#9fe0f2" stroke-width="1.9" stroke-linecap="square" stroke-linejoin="miter"/></svg>
<svg class="a" style="left:1466px;top:89.3px" width="12" height="7.3" viewBox="0 0 12 7.3"><path d="M1 6.3 L6.0 1.2 L11 6.3" fill="none" stroke="#9fe0f2" stroke-width="1.9" stroke-linecap="square" stroke-linejoin="miter"/></svg>
<svg class="a" style="left:1497px;top:88.9px" width="12" height="7.3" viewBox="0 0 12 7.3"><path d="M1 1 L6.0 6.1 L11 1" fill="none" stroke="#9fe0f2" stroke-width="1.9" stroke-linecap="square" stroke-linejoin="miter"/></svg>
<svg class="a" style="left:1862px;top:89.3px" width="12" height="7.3" viewBox="0 0 12 7.3"><path d="M1 6.3 L6.0 1.2 L11 6.3" fill="none" stroke="#9fe0f2" stroke-width="1.9" stroke-linecap="square" stroke-linejoin="miter"/></svg>
<svg class="a" style="left:1891.6px;top:88.9px" width="12" height="7.3" viewBox="0 0 12 7.3"><path d="M1 1 L6.0 6.1 L11 1" fill="none" stroke="#9fe0f2" stroke-width="1.9" stroke-linecap="square" stroke-linejoin="miter"/></svg>
<div class="a btn" style="left:701px;top:518px;width:100px;height:24px;"></div>
<div class="a btn" style="left:1021px;top:518px;width:100px;height:24px;"></div>
<div class="a btn" style="left:1134px;top:518px;width:100px;height:24px;"></div>
<div class="a btn" style="left:1528px;top:518px;width:100px;height:24px;"></div>
<div class="a btn" style="left:1808px;top:518px;width:100px;height:24px;"></div>
<div class="a fbtn" style="left:1296px;top:520px;width:56px;height:20px;"></div>
<div class="a inp" style="left:931px;top:549.5px;width:190px;height:19px;"></div>
<div class="a inp" style="left:971px;top:592.5px;width:150px;height:19px;"></div>
<div class="a inp" style="left:971px;top:614.5px;width:150px;height:19px;"></div>
<div class="a inp" style="left:1657px;top:549.5px;width:250px;height:19px;"></div>
<div class="a inp" style="left:1697px;top:591.5px;width:210px;height:19px;"></div>
<div class="a inp" style="left:1697px;top:613.5px;width:210px;height:19px;"></div>
<svg class="a" style="left:1107.5px;top:556.5px" width="9" height="6" viewBox="0 0 9 6"><path d="M0.8 0.8 L4.5 4.6 L8.2 0.8" fill="none" stroke="#8b97a6" stroke-width="1.2"/></svg>
<svg class="a" style="left:1107.5px;top:621.5px" width="9" height="6" viewBox="0 0 9 6"><path d="M0.8 0.8 L4.5 4.6 L8.2 0.8" fill="none" stroke="#8b97a6" stroke-width="1.2"/></svg>
<svg class="a" style="left:1893px;top:556.5px" width="9" height="6" viewBox="0 0 9 6"><path d="M0.8 0.8 L4.5 4.6 L8.2 0.8" fill="none" stroke="#8b97a6" stroke-width="1.2"/></svg>
<svg class="a" style="left:1893px;top:598.5px" width="9" height="6" viewBox="0 0 9 6"><path d="M0.8 0.8 L4.5 4.6 L8.2 0.8" fill="none" stroke="#8b97a6" stroke-width="1.2"/></svg>
<div class="a inp" style="left:721px;top:682.5px;width:80px;height:19px;"></div>
<svg class="a" style="left:726px;top:687.5px" width="18" height="9" viewBox="0 0 18 9"><path d="M4.2 0.8 L1 4.5 L4.2 8.2 M12.8 0.8 L16 4.5 L12.8 8.2" fill="none" stroke="#8491a1" stroke-width="1.1"/></svg>
<div class="a inp" style="left:721px;top:706.5px;width:80px;height:19px;"></div>
<svg class="a" style="left:726px;top:711.5px" width="18" height="9" viewBox="0 0 18 9"><path d="M4.2 0.8 L1 4.5 L4.2 8.2 M12.8 0.8 L16 4.5 L12.8 8.2" fill="none" stroke="#8491a1" stroke-width="1.1"/></svg>
<div class="a inp" style="left:721px;top:730.5px;width:80px;height:19px;"></div>
<svg class="a" style="left:726px;top:735.5px" width="18" height="9" viewBox="0 0 18 9"><path d="M4.2 0.8 L1 4.5 L4.2 8.2 M12.8 0.8 L16 4.5 L12.8 8.2" fill="none" stroke="#8491a1" stroke-width="1.1"/></svg>
<svg class="a" style="left:1702px;top:618.5px" width="18" height="9" viewBox="0 0 18 9"><path d="M4.2 0.8 L1 4.5 L4.2 8.2 M12.8 0.8 L16 4.5 L12.8 8.2" fill="none" stroke="#8491a1" stroke-width="1.1"/></svg>
<div class="a " style="left:1741.5px;top:616.5px;width:1px;height:14px;background:#e8edf2"></div>
<div class="a " style="left:811px;top:663px;width:181px;height:113px;background:#dfe3e8"></div>
<div class="a pal" style="left:811px;top:663px;width:45px;height:16px;background:#000000"></div>
<div class="a pal" style="left:856px;top:663px;width:45px;height:16px;background:#808080"></div>
<div class="a pal" style="left:901px;top:663px;width:45px;height:16px;background:#800000"></div>
<div class="a pal" style="left:946px;top:663px;width:45px;height:16px;background:#808000"></div>
<div class="a pal" style="left:811px;top:679px;width:45px;height:16px;background:#008000"></div>
<div class="a pal" style="left:856px;top:679px;width:45px;height:16px;background:#008080"></div>
<div class="a pal" style="left:901px;top:679px;width:45px;height:16px;background:#000080"></div>
<div class="a pal" style="left:946px;top:679px;width:45px;height:16px;background:#800080"></div>
<div class="a pal" style="left:811px;top:695px;width:45px;height:16px;background:#808040"></div>
<div class="a pal" style="left:856px;top:695px;width:45px;height:16px;background:#004040"></div>
<div class="a pal" style="left:901px;top:695px;width:45px;height:16px;background:#0080ff"></div>
<div class="a pal" style="left:946px;top:695px;width:45px;height:16px;background:#004080"></div>
<div class="a pal" style="left:811px;top:711px;width:45px;height:16px;background:#8000ff"></div>
<div class="a pal" style="left:856px;top:711px;width:45px;height:16px;background:#804000"></div>
<div class="a pal" style="left:901px;top:711px;width:45px;height:16px;background:#ffffff"></div>
<div class="a pal" style="left:946px;top:711px;width:45px;height:16px;background:#c0c0c0"></div>
<div class="a pal" style="left:811px;top:727px;width:45px;height:16px;background:#ff0000"></div>
<div class="a pal" style="left:856px;top:727px;width:45px;height:16px;background:#ffff00"></div>
<div class="a pal" style="left:901px;top:727px;width:45px;height:16px;background:#00ff00"></div>
<div class="a pal" style="left:946px;top:727px;width:45px;height:16px;background:#00ffff"></div>
<div class="a pal" style="left:811px;top:743px;width:45px;height:16px;background:#0000ff"></div>
<div class="a pal" style="left:856px;top:743px;width:45px;height:16px;background:#ff00ff"></div>
<div class="a pal" style="left:901px;top:743px;width:45px;height:16px;background:#ffff80"></div>
<div class="a pal" style="left:946px;top:743px;width:45px;height:16px;background:#00ff80"></div>
<div class="a pal" style="left:811px;top:759px;width:45px;height:16px;background:#80ffff"></div>
<div class="a pal" style="left:856px;top:759px;width:45px;height:16px;background:#8080ff"></div>
<div class="a pal" style="left:901px;top:759px;width:45px;height:16px;background:#ff0080"></div>
<div class="a pal" style="left:946px;top:759px;width:45px;height:16px;background:#f080b0"></div>
<div class="a " style="left:1014.5px;top:700.5px;width:44px;height:46px;background:#ffffff"></div>
<div class="a " style="left:699.5px;top:790px;width:1210px;height:36.5px;border:1px solid #243246;background:#2e3e55"></div>
<div class="a fbtn" style="left:1173px;top:799px;width:62.5px;height:20.5px;"></div>
<div class="a fbtn" style="left:1249.5px;top:799px;width:62.5px;height:20.5px;"></div>
<div class="a inp" style="left:1327px;top:799px;width:213px;height:20.5px;"></div>
<div class="a inp" style="left:1641px;top:799px;width:262px;height:20.5px;"></div>
<svg class="a" style="left:1896px;top:18px" width="8.5" height="8.5" viewBox="0 0 8.5 8.5"><path d="M0.5 0.5 L8.0 8.0 M8.0 0.5 L0.5 8.0" stroke="#8797a9" stroke-width="1.2" fill="none"/></svg>
<svg class="a" style="left:1896px;top:50.5px" width="8.5" height="8.5" viewBox="0 0 8.5 8.5"><path d="M0.5 0.5 L8.0 8.0 M8.0 0.5 L0.5 8.0" stroke="#8797a9" stroke-width="1.2" fill="none"/></svg>
<div class="a " style="left:1878px;top:15px;width:1px;height:17px;background:#34465a"></div>
<div class="a sep" style="left:65px;top:1057px;width:1px;height:16px;"></div>
<div class="a sep" style="left:298px;top:1057px;width:1px;height:16px;"></div>
<div class="a sep" style="left:367px;top:1057px;width:1px;height:16px;"></div>
<div class="a sep" style="left:603px;top:1057px;width:1px;height:16px;"></div>
<div class="a sep" style="left:710px;top:1057px;width:1px;height:16px;"></div>
<svg class="a" style="left:44px;top:1062px" width="9" height="6" viewBox="0 0 9 6"><path d="M0.8 0.8 L4.5 4.6 L8.2 0.8" fill="none" stroke="#8b97a6" stroke-width="1.2"/></svg>
<div class="a dk" style="left:824px;top:1055.5px;width:34px;height:17px;"></div>
<div class="a dk" style="left:867px;top:1055.5px;width:32.5px;height:17px;"></div>
<div class="a act" style="left:908.5px;top:1055.5px;width:33px;height:17px;"></div>
<div class="a act" style="left:975px;top:1055.5px;width:32px;height:17px;"></div>
<div class="a dk" style="left:1016.5px;top:1055.5px;width:32px;height:17px;"></div>
<svg class="a" style="left:975px;top:1055.5px" width="32" height="17" viewBox="0 0 32 17">
<rect x="6" y="3" width="16" height="2.2" fill="#0c1528"/><rect x="6" y="11.8" width="16" height="2.2" fill="#0c1528"/>
<path d="M6 4.2h16M6 13h16" stroke="#5a8fcf" stroke-width="2.2" stroke-dasharray="1 1.3"/>
<rect x="8" y="5.2" width="12" height="6.6" fill="#1b2a45"/><ellipse cx="14.5" cy="8.5" rx="4" ry="2.8" fill="#c9d3de"/><circle cx="14.5" cy="8.5" r="1.2" fill="#5f6f86"/>
<path d="M18.5 8.5H27" stroke="#0c1528" stroke-width="1.2"/></svg>
<svg class="a" style="left:1016.5px;top:1055.5px" width="32" height="17" viewBox="0 0 32 17">
<circle cx="16" cy="8.5" r="5.6" fill="none" stroke="#c2cad3" stroke-width="1.4"/>
<path d="M16 5v3.6M16 10.6v1" stroke="#c2cad3" stroke-width="1.3"/>
<path d="M12.3 2.2l1.2 1.6M19.7 2.2l-1.2 1.6M12.3 14.8l1.2-1.6M19.7 14.8l-1.2-1.6M22.6 6.5l1.4-.6M22.6 10.5l1.4.6M23 8.5h1.2" stroke="#c2cad3" stroke-width="1.2"/></svg>
<div class="a sb" style="left:4px;top:61px;width:43px;height:16px;"></div>
<svg class="a" style="left:4px;top:61px" width="43" height="16" viewBox="0 0 43 16"><path d="M16 1.700h9.300v12.300h-9.300z" fill="#d4d4ce"/><path d="M16 1.700h3.600l-3.600 3.600z" fill="#2e3238"/><path d="M19.600 1.700v3.600h-3.600" fill="none" stroke="#d4d4ce" stroke-width=".7"/></svg>
<div class="a sb" style="left:4px;top:84px;width:43px;height:16px;"></div>
<svg class="a" style="left:4px;top:84px" width="43" height="16" viewBox="0 0 43 16"><path d="M14 4h4.600l1 1.400h5.200v2H17l-3 5.600z" fill="#d4d4ce"/><path d="M17 7.200h10.600l-2.800 5.800h-10.800z" fill="#d4d4ce" stroke="#545a60" stroke-width=".7"/></svg>
<div class="a sb" style="left:4px;top:107px;width:43px;height:16px;"></div>
<svg class="a" style="left:4px;top:107px" width="43" height="16" viewBox="0 0 43 16"><path d="M15 2.700h11v11.600h-2v-4.300h-7v4.300h-2z" fill="#d4d4ce"/><path d="M18.200 11.200h4.600v3.100h-4.600z" fill="none" stroke="#d4d4ce" stroke-width="1.200"/><path d="M21.300 11.600v2" stroke="#d4d4ce" stroke-width="1.100"/></svg>
<div class="a sb" style="left:4px;top:151px;width:43px;height:16px;"></div>
<svg class="a" style="left:4px;top:151px" width="43" height="16" viewBox="0 0 43 16"><path d="M16.800 3.600h8.200v11.100h-8.200z" fill="#545a60" stroke="#d4d4ce" stroke-width="1.300"/><rect x="19" y="1.800" width="3.800" height="2.600" fill="#d4d4ce"/><path d="M17.500 6.800h6.800M17.500 9.200h6.800M17.500 11.600h6.800" stroke="#d4d4ce" stroke-width="1.200"/></svg>
<div class="a sb" style="left:4px;top:174px;width:43px;height:16px;"></div>
<svg class="a" style="left:4px;top:174px" width="43" height="16" viewBox="0 0 43 16"><path d="M19.300 13.700a3.100 3.100 0 0 1 .3-6.200a4.600 4.600 0 0 1 8.400-1.200a3.700 3.700 0 0 1 .8 7.400z" fill="#d4d4ce"/><circle cx="14.400" cy="6.100" r="2.900" fill="#545a60" stroke="#d4d4ce" stroke-width="1.100"/><path d="M14.400 4.600v1.700h1.300" stroke="#d4d4ce" stroke-width=".8" fill="none"/></svg>
<div class="a sb" style="left:4px;top:197px;width:43px;height:16px;"></div>
<svg class="a" style="left:4px;top:197px" width="43" height="16" viewBox="0 0 43 16"><path d="M6 9.600h6M17 9.600h8M30 9.600h6" stroke="#12a6e6" stroke-width="1.300"/><path d="M15.500 8.400l4.800-4l6 4.200" stroke="#12a6e6" stroke-width="1.700" fill="none"/><circle cx="14.300" cy="9.600" r="2.500" fill="#1c4464" stroke="#12a6e6" stroke-width="1.300"/><circle cx="27.500" cy="9.600" r="2.500" fill="#1c4464" stroke="#12a6e6" stroke-width="1.300"/></svg>
<div class="a sb" style="left:4px;top:220px;width:43px;height:16px;"></div>
<svg class="a" style="left:4px;top:220px" width="43" height="16" viewBox="0 0 43 16"><path d="M9.200 8.200h24.600" stroke="#d4d4ce" stroke-width="1"/><path d="M21.600 1v14.600" stroke="#d4d4ce" stroke-width="1"/><rect x="16.200" y="2.300" width="10.700" height="12" fill="#d4d4ce"/><rect x="17.900" y="4" width="2.900" height="3.300" fill="#545a60"/><rect x="22.400" y="4" width="2.900" height="3.300" fill="#545a60"/><rect x="17.900" y="9.300" width="2.900" height="3.300" fill="#545a60"/><rect x="22.400" y="9.300" width="2.900" height="3.300" fill="#545a60"/></svg>
<div class="a sb" style="left:4px;top:243px;width:43px;height:16px;"></div>
<svg class="a" style="left:4px;top:243px" width="43" height="16" viewBox="0 0 43 16"><path d="M11.700 5h7.600v5.200h-7.600zM23.700 5h6.300v5.200h-6.300z" fill="#d4d4ce"/><path d="M20 4.800v9.400M22.800 4.800v9.400" stroke="#d4d4ce" stroke-width="1.200"/></svg>
<div class="a sb" style="left:4px;top:266px;width:43px;height:16px;"></div>
<svg class="a" style="left:4px;top:266px" width="43" height="16" viewBox="0 0 43 16"><path d="M16.800 8.200l3.300 3.200l5.600-5.900" stroke="#f2f2ee" stroke-width="2" fill="none"/></svg>
<div class="a sb" style="left:4px;top:344px;width:43px;height:16px;"></div>
<svg class="a" style="left:4px;top:344px" width="43" height="16" viewBox="0 0 43 16"><path d="M6.800 2.900h2.800l3.600 4.300l8.600-.3l3.700-2.300l3.400.2l2.200 2l5.200 1.300l-.8 1l-7.200.6l-4.600.1l-2.400 3.200h-2.600l.7-3.100l-3.800-.1l-1.200 1.600h-1.800l.2-1.700l-4.600-.9l-1.400-1.600l2.300-.6z" fill="#d4d4ce"/></svg>
<div class="a sb" style="left:4px;top:367px;width:43px;height:16px;"></div>
<svg class="a" style="left:4px;top:367px" width="43" height="16" viewBox="0 0 43 16"><path d="M13 6.400h22.700" stroke="#d4d4ce" stroke-width="1"/><path d="M24.300 4.200v3M8 4l2 5M6 7l5-1" stroke="#d4d4ce" stroke-width="1.100"/><path d="M7.500 8.300l9.500.6l3-1.600h7.400l3.600 1.700l1.600 2l-.8 1.500l-3.200.3l-.8 1h-2.400l-.4-1l-5.600-.2l-3.600-2.400l-8.500-.9z" fill="#d4d4ce"/></svg>
<div class="a sb" style="left:4px;top:390px;width:43px;height:16px;"></div>
<svg class="a" style="left:4px;top:390px" width="43" height="16" viewBox="0 0 43 16"><path d="M6 9.600l9.500-.2l2.500-3.400h1.300l1.600-1.800l1.400 2.200l1.300-2.400l1.400 3l3.500 2.300l7.800-.3l-2.600 3.300H9z" fill="#d4d4ce"/></svg>
<div class="a sb" style="left:4px;top:413px;width:43px;height:16px;"></div>
<svg class="a" style="left:4px;top:413px" width="43" height="16" viewBox="0 0 43 16"><path d="M10 8c-1.500.2-2.200 1-2.200 2c0 1.200 1.300 2 3 2h17c1.800 0 2.800-.8 2.800-2c0-1-.8-1.900-2.200-2z" fill="#d4d4ce"/><path d="M13.500 8.200l1.200-3.400l3-.6l7.300.4l1.800 1.400l-1 .5l.6 1.700z" fill="#d4d4ce"/><path d="M25 6.400h11.300" stroke="#d4d4ce" stroke-width="1.300"/><path d="M10.500 5.800l4-1.400" stroke="#d4d4ce" stroke-width="1"/></svg>
<div class="a sb" style="left:4px;top:436px;width:43px;height:16px;"></div>
<svg class="a" style="left:4px;top:436px" width="43" height="16" viewBox="0 0 43 16"><path d="M7 10.800h28" stroke="#d4d4ce" stroke-width="1.500"/><path d="M7.200 10.800l5.600-6.200h16.400l5.600 6.200M12.800 4.600l4.100 6.200l4.100-6.200l4.100 6.200l4.100-6.200" stroke="#d4d4ce" stroke-width="1.300" fill="none"/><path d="M9 10.800v2.200M14.500 10.800v2.200M21 10.800v2.200M27.500 10.800v2.200M33 10.800v2.200" stroke="#d4d4ce" stroke-width="1.100"/></svg>
<div class="a sb" style="left:4px;top:459px;width:43px;height:16px;"></div>
<svg class="a" style="left:4px;top:459px" width="43" height="16" viewBox="0 0 43 16"><path d="M11 9h6.500M24.300 9h7" stroke="#d4d4ce" stroke-width="1.100"/><circle cx="20.900" cy="9" r="3.300" fill="none" stroke="#d4d4ce" stroke-width="1.100"/></svg>
<div class="a sb" style="left:4px;top:482px;width:43px;height:16px;"></div>
<svg class="a" style="left:4px;top:482px" width="43" height="16" viewBox="0 0 43 16"><circle cx="21.500" cy="8" r="5.500" fill="none" stroke="#d4d4ce" stroke-width="1.100"/><circle cx="21.500" cy="8" r="2.800" fill="none" stroke="#d4d4ce" stroke-width="1.100"/><circle cx="21.500" cy="8" r=".8" fill="#d4d4ce"/></svg>
<div class="a sb" style="left:4px;top:505px;width:43px;height:16px;"></div>
<svg class="a" style="left:4px;top:505px" width="43" height="16" viewBox="0 0 43 16"><circle cx="21.500" cy="8" r="4.600" fill="none" stroke="#d4d4ce" stroke-width="1.100"/><path d="M19.700 6.200l3.600 3.600M23.300 6.200l-3.600 3.600" stroke="#d4d4ce" stroke-width="1"/></svg>
<div class="a sb" style="left:4px;top:528px;width:43px;height:16px;"></div>
<svg class="a" style="left:4px;top:528px" width="43" height="16" viewBox="0 0 43 16"><circle cx="21.500" cy="4" r="1.500" fill="#d4d4ce"/><path d="M13.500 7.800h16l-2.500 3.200c-1.500 1.800-9.500 1.800-11 0z" fill="#d4d4ce"/><path d="M13.500 7.800h16" stroke="#d4d4ce" stroke-width="1.300"/></svg>
<div class="a sb" style="left:4px;top:551px;width:43px;height:16px;"></div>
<svg class="a" style="left:4px;top:551px" width="43" height="16" viewBox="0 0 43 16"><circle cx="13.300" cy="8" r="4.500" fill="none" stroke="#d4d4ce" stroke-width="1.100"/><circle cx="20.700" cy="8" r="4.500" fill="none" stroke="#d4d4ce" stroke-width="1.100"/><circle cx="28.100" cy="8" r="4.500" fill="none" stroke="#d4d4ce" stroke-width="1.100"/></svg>
<div class="a sb" style="left:4px;top:574px;width:43px;height:16px;"></div>
<svg class="a" style="left:4px;top:574px" width="43" height="16" viewBox="0 0 43 16"><path d="M6.600 12.200l3.900-7.400l3.900 7.400z" fill="none" stroke="#d4d4ce" stroke-width="1.600"/><path d="M21.300 3.400l4.400 4.600l-4.400 4.600l-4.400-4.600z" fill="none" stroke="#d4d4ce" stroke-width="1.700"/><rect x="28.800" y="4.800" width="6.800" height="7" fill="none" stroke="#d4d4ce" stroke-width="1.600"/></svg>
<div class="a sb" style="left:4px;top:597px;width:43px;height:16px;"></div>
<svg class="a" style="left:4px;top:597px" width="43" height="16" viewBox="0 0 43 16"><path d="M18 4.300l7.500 7.500M25.500 4.300l-7.500 7.500" stroke="#d3202a" stroke-width="2.800"/></svg>
<div class="a sb" style="left:4px;top:641px;width:43px;height:16px;"></div>
<svg class="a" style="left:4px;top:641px" width="43" height="16" viewBox="0 0 43 16"><circle cx="15.500" cy="8" r="3.300" fill="none" stroke="#d4d4ce" stroke-width="1.200"/><path d="M18.800 7.400h12.200v3h-1.600v-1.500h-1.400v1.500h-1.600v-1.500h-7.600z" fill="#d4d4ce"/></svg>
<div class="a sb" style="left:4px;top:664px;width:43px;height:16px;"></div>
<svg class="a" style="left:4px;top:664px" width="43" height="16" viewBox="0 0 43 16"><path d="M12.600 3.500v9M29 3.500v9" stroke="#d4d4ce" stroke-width="1.600"/><path d="M15 8h12" stroke="#d4d4ce" stroke-width="1.100"/><path d="M17 5.800l-2.700 2.200l2.700 2.200zM24.600 5.800l2.700 2.200l-2.700 2.200z" fill="#d4d4ce"/></svg>
<svg class="a" style="left:15px;top:295px" width="20" height="20" viewBox="0 0 20 20"><circle cx="10" cy="10" r="9.600" fill="#2f9d69"/><path d="M10 15.500v-10M6.200 9l3.800-3.800l3.800 3.800" fill="none" stroke="#174c34" stroke-width="1.500"/></svg>
<svg class="a" style="left:16px;top:1019.600px" width="20" height="20" viewBox="0 0 20 20"><circle cx="10" cy="10" r="10" fill="#c4636a"/><path d="M7 6.500h-1.500v7H7M8.500 10h6M12.500 7.800l2.200 2.200l-2.200 2.200" fill="none" stroke="#b8475a" stroke-width="1.200"/><circle cx="10" cy="10" r="6.500" fill="none" stroke="#b8525e" stroke-width="1"/></svg>
<div id="txt">
<span class="t" style="left:15.7px;top:10.6px;font-size:17px;font-weight:700;color:#7dd7f0;transform:scaleX(0.9303);-webkit-text-stroke:0.3px;">MISSIONSEDITOR</span>
<span class="t" style="left:178.2px;top:13.8px;font-size:12px;font-weight:700;color:#ffffff;transform:scaleX(0.9798);-webkit-text-stroke:0.3px;">DATEI</span>
<span class="t" style="left:223.3px;top:13.8px;font-size:12px;font-weight:700;color:#ffffff;transform:scaleX(0.9242);-webkit-text-stroke:0.3px;">BEARBEITEN</span>
<span class="t" style="left:306.4px;top:13.8px;font-size:12px;font-weight:700;color:#ffffff;transform:scaleX(0.9640);-webkit-text-stroke:0.3px;">START</span>
<span class="t" style="left:354.3px;top:13.8px;font-size:12px;font-weight:700;color:#ffffff;transform:scaleX(0.9635);-webkit-text-stroke:0.3px;">KAMPAGNE</span>
<span class="t" style="left:430.8px;top:13.8px;font-size:12px;font-weight:700;color:#ffffff;transform:scaleX(0.9697);-webkit-text-stroke:0.3px;">ANPASSEN</span>
<span class="t" style="left:505.0px;top:13.8px;font-size:12px;font-weight:700;color:#ffffff;transform:scaleX(0.9489);-webkit-text-stroke:0.3px;">GENERATOR</span>
<span class="t" style="left:587.0px;top:13.8px;font-size:12px;font-weight:700;color:#ffffff;transform:scaleX(0.9673);-webkit-text-stroke:0.3px;">VERSCH.</span>
<span class="t" style="left:8.4px;top:44.1px;font-size:10.5px;font-weight:700;color:#cdd8e6;transform:scaleX(1.0770);-webkit-text-stroke:0.3px;">DATEI</span>
<span class="t" style="left:13.5px;top:136.8px;font-size:10.5px;font-weight:700;color:#cdd8e6;transform:scaleX(1.0979);-webkit-text-stroke:0.3px;">MIS</span>
<span class="t" style="left:14.5px;top:328.3px;font-size:10.5px;font-weight:700;color:#cdd8e6;transform:scaleX(0.9262);-webkit-text-stroke:0.3px;">OBJ</span>
<span class="t" style="left:7.0px;top:627.1px;font-size:10.5px;font-weight:700;color:#cdd8e6;transform:scaleX(1.0229);-webkit-text-stroke:0.3px;">KARTE</span>
<span class="t" style="left:705.0px;top:48.7px;font-size:13.3px;font-weight:700;color:#80dcf2;transform:scaleX(0.9574);-webkit-text-stroke:0.3px;">TRIGGER</span>
<span class="t" style="left:701.5px;top:87.7px;font-size:12.2px;font-weight:400;color:#d0d6dd;transform:scaleX(0.8554);">TRIGGER</span>
<span class="t" style="left:1136.0px;top:87.7px;font-size:12.2px;font-weight:400;color:#d0d6dd;transform:scaleX(0.8778);">REGELN</span>
<span class="t" style="left:1528.0px;top:87.7px;font-size:12.2px;font-weight:400;color:#d0d6dd;transform:scaleX(0.8987);">AKTIONEN</span>
<span class="t" style="left:1002.5px;top:87.8px;font-size:12px;font-weight:700;color:#f2f5f8;transform:scaleX(0.9473);-webkit-text-stroke:0.3px;">KLONEN</span>
<span class="t" style="left:1394.5px;top:87.8px;font-size:12px;font-weight:700;color:#f2f5f8;transform:scaleX(0.9473);-webkit-text-stroke:0.3px;">KLONEN</span>
<span class="t" style="left:1790.5px;top:87.8px;font-size:12px;font-weight:700;color:#f2f5f8;transform:scaleX(0.9473);-webkit-text-stroke:0.3px;">KLONEN</span>
<span class="t" style="left:712.5px;top:113.7px;font-size:11.2px;font-weight:400;color:#7fc6e2;transform:scaleX(0.9257);">EINMALIG (Trigger 1596344026, KEIN EVENT)</span>
<span class="t" style="left:1539.5px;top:113.7px;font-size:11.2px;font-weight:400;color:#7fc6e2;transform:scaleX(0.9128);">SZENERIE ZERSTÖRUNGSZONE (Neue Triggerzone-1, 90)</span>
<span class="t" style="left:738.5px;top:524.8px;font-size:12px;font-weight:700;color:#f4f6f9;transform:scaleX(0.9470);-webkit-text-stroke:0.3px;">NEU</span>
<span class="t" style="left:1036.0px;top:524.8px;font-size:12px;font-weight:700;color:#f4f6f9;transform:scaleX(0.9476);-webkit-text-stroke:0.3px;">ENTFERNEN</span>
<span class="t" style="left:1171.5px;top:524.8px;font-size:12px;font-weight:700;color:#f4f6f9;transform:scaleX(0.9470);-webkit-text-stroke:0.3px;">NEU</span>
<span class="t" style="left:1307.0px;top:524.8px;font-size:12px;font-weight:700;color:#f4f6f9;transform:scaleX(0.9518);-webkit-text-stroke:0.3px;">ODER</span>
<span class="t" style="left:1565.0px;top:524.8px;font-size:12px;font-weight:700;color:#f4f6f9;transform:scaleX(0.9667);-webkit-text-stroke:0.3px;">NEU</span>
<span class="t" style="left:1823.5px;top:524.8px;font-size:12px;font-weight:700;color:#f4f6f9;transform:scaleX(0.9476);-webkit-text-stroke:0.3px;">ENTFERNEN</span>
<span class="t" style="left:703.0px;top:553.9px;font-size:12.2px;font-weight:400;color:#d0d6dd;transform:scaleX(0.8858);">TYP:</span>
<span class="t" style="left:936.0px;top:553.9px;font-size:12.2px;font-weight:400;color:#d0d6dd;transform:scaleX(0.9528);">EINMALIG</span>
<span class="t" style="left:703.0px;top:597.2px;font-size:12.2px;font-weight:400;color:#d0d6dd;transform:scaleX(0.8806);">NAME:</span>
<span class="t" style="left:977.0px;top:596.9px;font-size:12.2px;font-weight:400;color:#f4f6f8;transform:scaleX(1.0107);">Trigger 1596344026</span>
<span class="t" style="left:703.0px;top:618.9px;font-size:12.2px;font-weight:400;color:#d0d6dd;transform:scaleX(0.8760);">EREIGNIS:</span>
<span class="t" style="left:976.0px;top:618.7px;font-size:12.2px;font-weight:400;color:#d0d6dd;transform:scaleX(0.9452);">KEIN EVENT</span>
<span class="t" style="left:703.0px;top:657.7px;font-size:12.2px;font-weight:400;color:#d0d6dd;transform:scaleX(0.8256);">FARBE</span>
<span class="t" style="left:703.0px;top:686.7px;font-size:12.2px;font-weight:400;color:#d0d6dd;transform:scaleX(0.7943);">R</span>
<span class="t" style="left:703.0px;top:710.7px;font-size:12.2px;font-weight:400;color:#d0d6dd;transform:scaleX(0.8435);">G</span>
<span class="t" style="left:703.0px;top:734.7px;font-size:12.2px;font-weight:400;color:#d0d6dd;transform:scaleX(0.8599);">B</span>
<span class="t" style="left:751.0px;top:686.7px;font-size:12.2px;font-weight:400;color:#f0f3f6;transform:scaleX(1.0077);">255</span>
<span class="t" style="left:751.0px;top:710.7px;font-size:12.2px;font-weight:400;color:#f0f3f6;transform:scaleX(1.0077);">255</span>
<span class="t" style="left:751.0px;top:734.7px;font-size:12.2px;font-weight:400;color:#f0f3f6;transform:scaleX(1.0077);">255</span>
<span class="t" style="left:1528.0px;top:553.9px;font-size:12.2px;font-weight:400;color:#d0d6dd;transform:scaleX(0.9023);">AKTION:</span>
<span class="t" style="left:1662.0px;top:553.9px;font-size:12.2px;font-weight:400;color:#d0d6dd;transform:scaleX(0.9445);">SZENERIE ZERSTÖRUNGSZONE</span>
<span class="t" style="left:1528.0px;top:595.9px;font-size:12.2px;font-weight:400;color:#d0d6dd;transform:scaleX(0.9128);">ZONE:</span>
<span class="t" style="left:1702.0px;top:595.7px;font-size:12.2px;font-weight:400;color:#f0f3f6;transform:scaleX(1.0397);">Neue Triggerzone-1</span>
<span class="t" style="left:1528.0px;top:618.0px;font-size:12.2px;font-weight:400;color:#d0d6dd;transform:scaleX(0.8953);">ZERSTÖRUNGSGRAD %'</span>
<span class="t" style="left:1727.0px;top:618.0px;font-size:12.2px;font-weight:400;color:#f0f3f6;transform:scaleX(0.9954);">90</span>
<span class="t" style="left:706.0px;top:803.9px;font-size:12.2px;font-weight:400;color:#d0d6dd;transform:scaleX(0.8827);">INITIALISIERUNGSSKRIPT</span>
<span class="t" style="left:1180.0px;top:803.6px;font-size:12px;font-weight:700;color:#f4f6f9;transform:scaleX(0.9626);-webkit-text-stroke:0.3px;">ÖFFNEN</span>
<span class="t" style="left:1262.0px;top:803.6px;font-size:12px;font-weight:700;color:#f4f6f9;transform:scaleX(0.9246);-webkit-text-stroke:0.3px;">RESET</span>
<span class="t" style="left:1585.0px;top:803.9px;font-size:12.2px;font-weight:400;color:#d0d6dd;transform:scaleX(0.8944);">CODE</span>
<span class="t" style="left:8.5px;top:1058.2px;font-size:12.2px;font-weight:400;color:#c3cbd4;transform:scaleX(0.9297);">DFLT</span>
<span class="t" style="left:75.0px;top:1058.2px;font-size:12.2px;font-weight:400;color:#c3cbd4;transform:scaleX(1.0237);">FA18.miz</span>
<span class="t" style="left:371.0px;top:1058.2px;font-size:12.2px;font-weight:400;color:#b9c2cc;transform:scaleX(1.0730);">X+00012533 Z+00366037</span>
<span class="t" style="left:612.0px;top:1058.2px;font-size:12.2px;font-weight:400;color:#e8ecf0;transform:scaleX(0.9654);">HÖHE</span>
<span class="t" style="left:663.0px;top:1058.2px;font-size:12.2px;font-weight:400;color:#c3cbd4;transform:scaleX(1.0323);">26</span>
<span class="t" style="left:718.0px;top:1058.2px;font-size:12.2px;font-weight:400;color:#e8ecf0;transform:scaleX(0.9844);">SCHWK./AUSW.</span>
<span class="t" style="left:823.5px;top:1058.9px;font-size:11.5px;font-weight:700;color:#d5dbe2;transform:scaleX(0.9211);clip-path:inset(-2px 2.5px -2px 0.5px);-webkit-text-stroke:0.3px;">KARTE</span>
<span class="t" style="left:872.0px;top:1058.9px;font-size:11.5px;font-weight:700;color:#e6eaee;transform:scaleX(0.9704);-webkit-text-stroke:0.3px;">SAT</span>
<span class="t" style="left:909.0px;top:1058.9px;font-size:11.5px;font-weight:700;color:#0a1030;transform:scaleX(0.9929);clip-path:inset(-2px 1.2px -2px 0);-webkit-text-stroke:0.3px;">HÖHE</span>
<span class="t" style="left:1798.0px;top:1060.5px;font-size:12.2px;font-weight:400;color:#aeb8c3;transform:scaleX(1.0582);">2.08.2020 6:54:47</span>
</div>
</body></html>
